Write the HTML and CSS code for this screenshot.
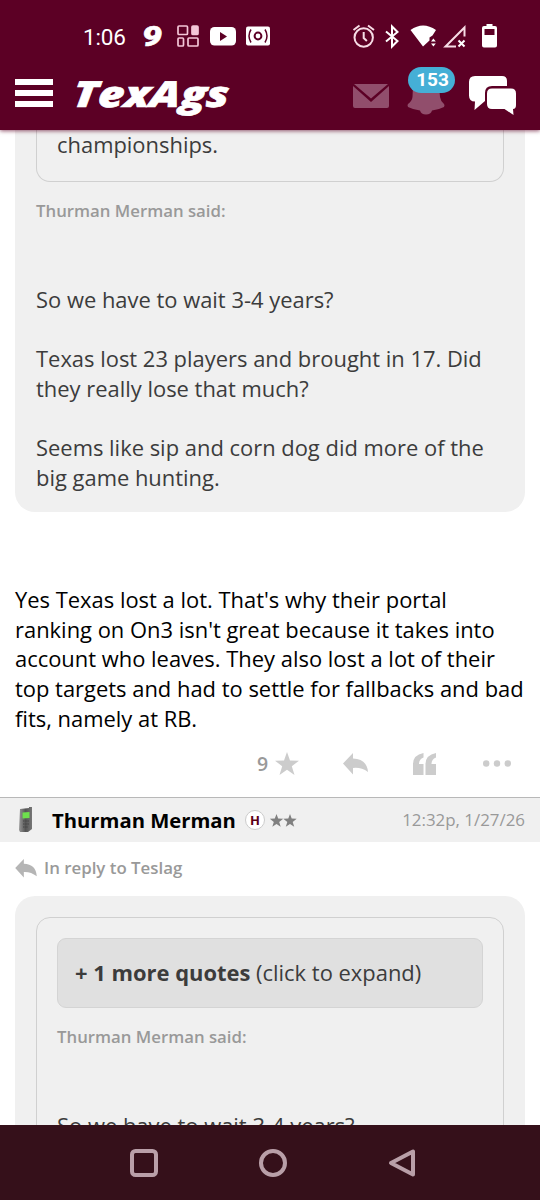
FILE: index.html
```html
<!DOCTYPE html>
<html lang="en">
<head>
<meta charset="utf-8">
<title>TexAgs</title>
<link rel="stylesheet" href="styles.css">
</head>
<body>
<div class="screen">
  <header class="top">
    <div class="status">
      <svg class="status-left" width="190" height="32" viewBox="82 20 190 32">
        <text class="clock" x="83" y="44.5" textLength="43">1:06</text>
        <text class="nine" x="142" y="45.500" textLength="20" lengthAdjust="spacingAndGlyphs">9</text>
        <g fill="none" stroke="#f4c6d8" stroke-width="1.7">
          <rect x="178" y="26" width="9.500" height="8.500" rx="1"/>
          <rect x="178" y="38" width="5.500" height="8" rx="1"/>
          <rect x="188" y="38" width="10" height="8" rx="1"/>
          <rect x="192" y="26" width="6" height="8.500" rx="1" fill="#f4c6d8"/>
        </g>
        <rect x="210" y="27" width="26" height="18.500" rx="4.500" fill="#fff"/>
        <path d="M220 32v9l7-4.500z" fill="#5c0025"/>
        <rect x="246" y="26.500" width="24" height="19" rx="2" fill="#fff"/>
        <g fill="none" stroke="#5c0025" stroke-width="1.500">
          <circle cx="258" cy="36" r="3.400" stroke-width="2"/>
          <path d="M251 29.500q-4 6.500 0 13M265 29.500q4 6.500 0 13"/>
        </g>
      </svg>
      <svg class="status-right" width="150" height="32" viewBox="350 20 150 32">
        <g fill="none" stroke="#f7dce6" stroke-width="2">
          <circle cx="363.700" cy="37.500" r="9.200"/>
          <path d="M363.700 32v6l3.200 3M353.500 30l6-4.500M368 25.500l6 4.500"/>
          <path d="M386 31.500l11.500 9.500-5.500 5.500v-20l5.500 5.500-11.500 9.500" stroke="#fff"/>
          <path d="M464.500 36.500v-9L445.500 46.500h10.500"/>
          <path d="M458.500 40.500l6 6m0-6l-6 6" stroke="#fff"/>
        </g>
        <g fill="#fff">
          <path d="M410.500 30q12.500-9 25.500 0l-3.500 5.500-3 2v3l-6.500 6z"/>
          <path d="M431 41.500l2.400-3 2.400 3zM431 43.500l2.400 3 2.400-3z"/>
          <path d="M484 26h2.500v-2h6v2H495q2 0 2 2v17.500q0 2-2 2h-11q-2 0-2-2V28q0-2 2-2z"/>
        </g>
        <path d="M484.500 29h10v6h-10z" fill="#5c0025"/>
      </svg>
    </div>
    <div class="nav">
      <div class="menu"><i></i><i></i><i></i></div>
      <svg class="logo" width="162" height="44" viewBox="70 74 162 44">
        <text class="wordmark" transform="translate(72 107) skewX(-6)" textLength="156" lengthAdjust="spacingAndGlyphs">TexAgs</text>
      </svg>
      <svg class="mail" width="36" height="24" viewBox="0 0 36 24">
        <path d="M1 0h34L18 14.500zM0 2l18 16L36 2v20q0 2-2 2H2q-2 0-2-2z"/>
      </svg>
      <div class="alerts">
        <svg width="38" height="38" viewBox="0 0 38 38"><path d="M6 9q1-7 13-9 12 2 13 9l1 11q.5 4 4 7 1 1 0 3-6 3-12 3.500-1 4-6 4t-6-4Q7 33 1 30q-1-2 0-3 4-3 4.500-7z"/></svg>
        <span class="count">153</span>
      </div>
      <svg class="chat" width="48" height="40" viewBox="0 0 48 40">
        <path d="M6 0h27q5 0 5 5v5H23q-7 0-7 7v8l-10.500 9 .5-8.500q-6 0-6-6V6q0-6 6-6z"/>
        <path d="M23 12.500h19q5 0 5 5V29q0 4-3 4l.5 6-9-6H23q-5 0-5-5V17.500q0-5 5-5z"/>
      </svg>
    </div>
  </header>

  <main class="thread">
    <section class="quote quote-first">
      <div class="inner inner-end">championships.</div>
      <div class="said">Thurman Merman said:</div>
      <p class="lead">So we have to wait 3-4 years?</p>
      <p>Texas lost 23 players and brought in 17. Did<br>they really lose that much?</p>
      <p>Seems like sip and corn dog did more of the<br>big game hunting.</p>
    </section>
    <p class="post">Yes Texas lost a lot. That's why their portal<br>ranking on On3 isn't great because it takes into<br>account who leaves. They also lost a lot of their<br>top targets and had to settle for fallbacks and bad<br>fits, namely at RB.</p>
    <div class="actions">
      <span class="score">9</span>
      <svg class="star" width="24" height="23" viewBox="0 0 24 23"><path d="M12 0l3 8.500 9 .2-7.200 5.500L19.500 23 12 17.800 4.500 23l2.700-8.800L0 8.700l9-.2z"/></svg>
      <svg class="reply" width="25" height="22" viewBox="0 0 25 22"><path d="M0 10.500L10 0v5.500Q24 6 25 19q-7-5-15-4v6.500z"/></svg>
      <svg class="marks" width="23" height="22" viewBox="0 0 23 22"><path id="mark" d="M10.500 0v4.500Q6 6 6 11h4.500v11H0V11Q0 2 10.500 0z"/><use href="#mark" x="12.500"/></svg>
      <svg class="more" width="28" height="7" viewBox="0 0 28 7"><circle cx="3.200" cy="3.500" r="3.200"/><circle cx="14" cy="3.500" r="3.200"/><circle cx="24.800" cy="3.500" r="3.200"/></svg>
    </div>

    <div class="byline">
      <svg class="phone" width="16" height="26" viewBox="0 0 16 26">
        <defs><linearGradient id="case"><stop stop-color="#999"/><stop offset=".5" stop-color="#555"/><stop offset="1" stop-color="#777"/></linearGradient></defs>
        <path d="M2 2l9-1V0h3v22l-4 3H2l-1-2z" fill="url(#case)"/>
        <path d="M4.500 5.500l7-.5v6l-7 .5z" fill="#6ee04d"/>
        <path d="M5 14h6M5 17h6M5 20h5" stroke="#444" stroke-width="1.200" stroke-dasharray="1.500 .7"/>
      </svg>
      <b class="author">Thurman Merman</b>
      <span class="house">H</span>
      <svg class="rank" width="27" height="13" viewBox="0 0 27 13"><path id="s" d="M6.500 0l1.700 4.600 5 .1-4 3.200 1.500 4.900-4.200-2.900-4.200 2.900 1.500-4.900-4-3.200 5-.1z"/><use href="#s" x="13.500"/></svg>
      <time>12:32p, 1/27/26</time>
    </div>
    <div class="context">
      <svg width="22" height="19" viewBox="0 0 25 22"><path d="M0 10.500L10 0v5.500Q24 6 25 20q-7-5.500-15-5v6.500z"/></svg>
      <span>In reply to Teslag</span>
    </div>
    <section class="quote quote-next">
      <div class="inner inner-start">
        <div class="expand"><b>+ 1 more quotes</b> (click to expand)</div>
        <div class="said">Thurman Merman said:</div>
        <p class="lead">So we have to wait 3-4 years?</p>
      </div>
    </section>
  </main>

  <footer class="system">
    <svg width="28" height="28" viewBox="0 0 28 28"><rect x="2" y="2" width="24" height="24" rx="3.500"/></svg>
    <svg width="28" height="28" viewBox="0 0 28 28"><circle cx="14" cy="14" r="12"/></svg>
    <svg width="28" height="28" viewBox="0 0 28 28"><path d="M25 2.500v23L3 14z"/></svg>
  </footer>
</div>
</body>
</html>
```

FILE: styles.css
```css
* { box-sizing: border-box; }
body { margin: 0; }
p { margin: 0; }
svg { display: block; flex: none; overflow: visible; }

.screen {
  width: 540px;
  height: 1200px;
  overflow: hidden;
  display: flex;
  flex-direction: column;
  background: #fff;
  color: #000;
  font: 21.930px/29.650px "Open Sans", sans-serif;
}

/* Header */
.top {
  flex: none;
  height: 130px;
  background: #5c0025;
  box-shadow: 0 1px 4px rgba(92, 0, 37, .65);
  z-index: 1;
}
.status {
  display: flex;
  justify-content: space-between;
  padding: 20px 40px 0 82px;
}
.clock { font: 22.5px Roboto, sans-serif; fill: #fff; }
.nine { font: italic 900 28px Roboto, sans-serif; fill: #fff; stroke: #fff; stroke-width: .6px; }
.nav {
  display: flex;
  align-items: flex-start;
  padding: 22px 0 0 15px;
}
.menu {
  display: flex;
  flex-direction: column;
  gap: 5.500px;
  width: 38px;
  margin-top: 5px;
}
.menu i { height: 5.500px; background: #fff; }
.logo { margin-left: 17px; }
.wordmark {
  font: italic 800 36px "Open Sans", sans-serif;
  fill: #fff;
  stroke: #fff;
  stroke-width: .6px;
}
.mail { margin: 10px 0 0 121px; fill: #914e6c; }
.alerts { position: relative; margin: 3px 0 0 18px; width: 38px; }
.alerts svg { fill: #914e6c; }
.count {
  position: absolute;
  left: 1px;
  top: -10px;
  width: 47px;
  height: 26px;
  padding-left: 2px;
  border-radius: 13px;
  background: #45afd6;
  color: #fff;
  font: bold 19px/26px Roboto, sans-serif;
  text-align: center;
}
.chat { margin: 2px 0 0 24px; fill: #fff; }

/* Thread */
.thread { flex: 1; min-height: 0; overflow: hidden; }
.quote {
  margin: 0 15px;
  padding: 0 21px;
  background: #f0f0f0;
  color: #3c3c3c;
}
.quote-first { height: 382px; border-radius: 0 0 20px 20px; }
.inner { border: 1.500px solid #d0d0d0; padding: 0 20px; }
.inner-end { height: 52px; border-top: 0; border-radius: 0 0 14px 14px; }
.said {
  padding-top: 14px;
  color: #999;
  font-size: 16.800px;
  font-weight: 600;
}
.quote p { margin-bottom: 29.650px; }
.quote .lead { margin-top: 59.300px; }
.post { margin: 73px 15px 0; white-space: nowrap; }
.actions {
  display: flex;
  align-items: center;
  height: 64px;
  padding: 0 0 3px 257px;
  color: #999;
}
.actions svg { fill: #ccc; }
.score { width: 18px; font-size: 19.500px; font-weight: 600; }
.reply { margin-left: 44px; }
.marks { margin-left: 45px; }
.more { margin-left: 47px; }

.byline {
  display: flex;
  align-items: center;
  height: 45px;
  padding: 0 15px 0 18px;
  border-top: 1.500px solid #b8b8b8;
  background: #f0f0f0;
}
.author { margin: 1px 0 0 18px; font-size: 20.250px; }
.house {
  width: 20px;
  height: 20px;
  margin-left: 9px;
  border: 1px solid #ccc;
  border-radius: 50%;
  background: #fff;
  color: #5c0016;
  font-size: 13px;
  font-weight: 700;
  line-height: 18px;
  text-align: center;
}
.rank { margin-left: 5px; fill: #808080; }
time { margin-left: auto; color: #999; font-size: 16.900px; }
.context {
  display: flex;
  align-items: center;
  gap: 7px;
  height: 54px;
  padding: 0 15px 2px;
  color: #999;
  font-size: 16.850px;
  font-weight: 600;
}
.context svg { fill: #b5b5b5; }
.quote-next { height: 320px; padding-top: 21px; border-radius: 20px 20px 0 0; }
.inner-start { height: 320px; padding-top: 20px; border-radius: 14px 14px 0 0; }
.expand {
  height: 70px;
  padding-left: 17px;
  border: 1.500px solid #d4d4d4;
  border-radius: 9px;
  background: #e0e0e0;
  line-height: 68px;
  white-space: nowrap;
}

/* System navigation */
.system {
  flex: none;
  display: flex;
  align-items: center;
  justify-content: center;
  gap: 101px;
  height: 75px;
  padding-left: 6px;
  background: #35101a;
}
.system svg { fill: none; stroke: #b99fa8; stroke-width: 4; stroke-linejoin: round; }
```
